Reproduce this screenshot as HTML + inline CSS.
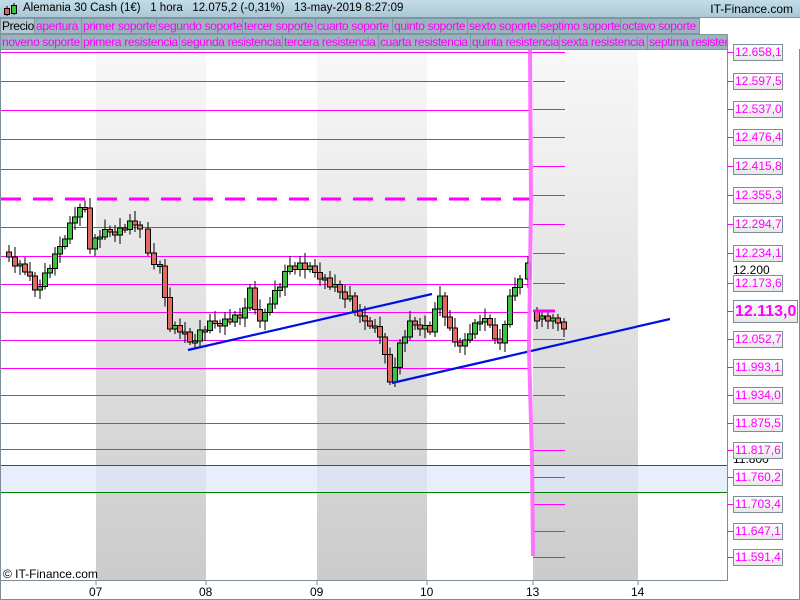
<!DOCTYPE html>
<html><head><meta charset="utf-8"><style>
*{margin:0;padding:0;box-sizing:border-box}
body{width:800px;height:600px;overflow:hidden;background:#fff;font-family:"Liberation Sans",sans-serif;position:relative}
#hdr{position:absolute;left:0;top:0;width:800px;height:18px;background:linear-gradient(#c4dde8,#a9c8d6);border-bottom:1px solid #7d96a3}
#hdr .t{position:absolute;left:23px;top:2px;font-size:11.5px;color:#000;white-space:pre}
#hdr .r{position:absolute;right:7px;top:2px;font-size:12px;color:#000}
.row{position:absolute;left:0;height:16px}
.c{position:absolute;top:0;height:16px;background:#9cb2be;border:1px solid #7d96a3;color:#f0f;font-size:12px;letter-spacing:-0.35px;line-height:14px;padding-left:1px;white-space:nowrap;overflow:hidden}
.lab{position:absolute;left:733px;width:50px;height:17px;border:1px solid #7d8c96;background:linear-gradient(#fff,#e8e8e8);color:#f0f;font-size:12px;line-height:15px;padding-left:1px}
.tk{position:absolute;left:727px;width:6px;height:1px;background:#f0f}
.xl{position:absolute;top:585px;font-size:12px;color:#000}
</style></head><body>
<div id="hdr">
<svg style="position:absolute;left:3px;top:2px" width="16" height="15"><line x1="4" y1="4" x2="4" y2="14" stroke="#000"/><rect x="1.5" y="6.5" width="5" height="6" fill="#e06060" stroke="#000"/><line x1="11" y1="1" x2="11" y2="13" stroke="#000"/><rect x="8.5" y="3.5" width="5" height="8" fill="#40c040" stroke="#000"/></svg>
<div class="t">Alemania 30 Cash (1€)   1 hora   12.075,2 (-0,31%)   13-may-2019 8:27:09</div>
<div class="r">IT-Finance.com</div>
</div>
<div class="row" style="top:18px;width:700px">
<div class="c" style="left:0;width:35px;color:#000;background:#b4c8d2">Precio</div>
<div class="c" style="left:34px;width:48px">apertura</div>
<div class="c" style="left:81px;width:76px">primer soporte</div>
<div class="c" style="left:156px;width:87px">segundo soporte</div>
<div class="c" style="left:242px;width:74px">tercer soporte</div>
<div class="c" style="left:315px;width:78px">cuarto soporte</div>
<div class="c" style="left:392px;width:76px">quinto soporte</div>
<div class="c" style="left:467px;width:72px">sexto soporte</div>
<div class="c" style="left:538px;width:83px">septimo soporte</div>
<div class="c" style="left:620px;width:80px">octavo soporte</div>
</div>
<div class="row" style="top:34px;width:728px">
<div class="c" style="left:0;width:82px">noveno soporte</div>
<div class="c" style="left:81px;width:99px">primera resistencia</div>
<div class="c" style="left:179px;width:104px">segunda resistencia</div>
<div class="c" style="left:282px;width:97px">tercera resistencia</div>
<div class="c" style="left:378px;width:93px">cuarta resistencia</div>
<div class="c" style="left:470px;width:90px">quinta resistencia</div>
<div class="c" style="left:559px;width:89px">sexta resistencia</div>
<div class="c" style="left:647px;width:81px">septima resistencia</div>
</div>
<svg id="ch" style="position:absolute;left:0;top:0" width="800" height="600">
<defs><linearGradient id="g" x1="0" y1="0" x2="0" y2="1"><stop offset="0" stop-color="#f8f8f8"/><stop offset="1" stop-color="#cbcbcb"/></linearGradient></defs>
<rect x="96" y="50" width="110" height="530" fill="url(#g)"/>
<rect x="317" y="50" width="110" height="530" fill="url(#g)"/>
<rect x="533" y="50" width="105" height="530" fill="url(#g)"/>
<rect x="1" y="465" width="726" height="27" fill="#dfe8fb" opacity="0.75"/>
<line x1="1" y1="465.5" x2="727" y2="465.5" stroke="#008000"/>
<line x1="1" y1="492.5" x2="727" y2="492.5" stroke="#008000"/>
<g id="hl" stroke="#f0f" stroke-width="1"></g>
<line x1="1" y1="199" x2="530" y2="199" stroke="#f0f" stroke-width="3" stroke-dasharray="20,12"/>
<g id="cd"></g>
<line x1="188" y1="350" x2="432" y2="294" stroke="#0010e0" stroke-width="2.2"/>
<line x1="392" y1="383" x2="670" y2="319" stroke="#0010e0" stroke-width="2.2"/>
<polyline points="530,50 531,200 529,350 532,460 533,556" fill="none" stroke="#f6f" stroke-width="4" opacity="0.9"/>
<line x1="533" y1="311" x2="555" y2="311" stroke="#f0f" stroke-width="3"/>
<line x1="727.5" y1="49" x2="727.5" y2="581" stroke="#7d8c96"/>
<line x1="0" y1="580.5" x2="728" y2="580.5" stroke="#7d8c96"/>
<line x1="0.5" y1="49" x2="0.5" y2="600" stroke="#7d8c96"/>
<line x1="799.5" y1="49" x2="799.5" y2="600" stroke="#7d8c96"/>
<line x1="0" y1="599.5" x2="800" y2="599.5" stroke="#7d8c96"/>
<g stroke="#7d8c96"><line x1="96" y1="580" x2="96" y2="585"/><line x1="206" y1="580" x2="206" y2="585"/><line x1="317" y1="580" x2="317" y2="585"/><line x1="427" y1="580" x2="427" y2="585"/><line x1="533" y1="580" x2="533" y2="585"/><line x1="638" y1="580" x2="638" y2="585"/></g>
</svg>
<div style="position:absolute;left:3px;top:567px;font-size:12px">© IT-Finance.com</div>
<div class="xl" style="left:89px">07</div><div class="xl" style="left:199px">08</div><div class="xl" style="left:310px">09</div><div class="xl" style="left:420px">10</div><div class="xl" style="left:526px">13</div><div class="xl" style="left:631px">14</div>
<div style="position:absolute;left:733px;top:263px;font-size:12px">12.200</div>
<div style="position:absolute;left:733px;top:452px;font-size:12px">11.800</div>
<div id="labs"></div>
<script>
(function(){
var labs=[["12.658,1",52],["12.597,5",81],["12.537,0",109],["12.476,4",137],["12.415,8",166],["12.355,3",195],["12.294,7",224],["12.234,1",253],["12.173,6",283],["12.052,7",339],["11.993,1",367],["11.934,0",395],["11.875,5",423],["11.817,6",450],["11.760,2",477],["11.703,4",504],["11.647,1",531],["11.591,4",557]];
var h="";labs.forEach(function(l){h+='<div class="tk" style="top:'+l[1]+'px"></div><div class="lab" style="top:'+(l[1]-8)+'px">'+l[0]+'</div>';});
h+='<div class="tk" style="top:311px"></div><div class="lab" style="top:300px;width:65px;height:23px;font-size:16px;font-weight:bold;line-height:21px">12.113,0</div>';
document.getElementById("labs").innerHTML=h;
var hl=document.getElementById("hl"),s="";
[52,81,110,139,169,227,256,284,312,340,368,395,423,449].forEach(function(y){s+='<line x1="1" y1="'+(y+.5)+'" x2="530" y2="'+(y+.5)+'"/>';});
labs.forEach(function(l){s+='<line x1="533" y1="'+(l[1]+.5)+'" x2="565" y2="'+(l[1]+.5)+'"/>';});
s+='<line x1="1" y1="52.5" x2="565" y2="52.5"/>';
hl.innerHTML=s;
var pts=[[3,252],[15,262],[25,270],[35,290],[45,275],[55,258],[65,235],[75,215],[85,208],[90,245],[100,235],[110,232],[120,230],[130,225],[140,225],[148,255],[160,270],[170,325],[180,330],[190,342],[200,332],[210,325],[220,322],[230,320],[240,318],[250,290],[260,325],[270,300],[280,285],[290,266],[300,265],[310,270],[320,275],[330,285],[340,292],[350,298],[360,320],[370,322],[380,335],[390,382],[400,345],[410,325],[420,325],[430,330],[440,296],[450,330],[460,350],[470,330],[480,320],[490,325],[500,345],[510,300],[520,275],[528,265]];
var c="",prev=pts[0][1],k=0;
for(var i=1;i<pts.length;i++){var a=pts[i-1],b=pts[i],n=Math.max(1,Math.round((b[0]-a[0])/5.5));
for(var j=1;j<=n;j++){k++;var x=a[0]+(b[0]-a[0])*j/n,y=a[1]+(b[1]-a[1])*j/n+((k*7)%5-2)*2;
var t0=Math.min(prev,y),b0=Math.max(prev,y);if(b0-t0<2)b0=t0+2;var up=y<prev;
c+='<line x1="'+x+'" y1="'+(t0-4-(k%3)*3)+'" x2="'+x+'" y2="'+(b0+3+(k%4)*2)+'" stroke="#000"/>';
c+='<rect x="'+(x-2.5)+'" y="'+t0+'" width="5" height="'+(b0-t0)+'" fill="'+(up?'#40c040':'#e06a60')+'" stroke="#000" stroke-width="1"/>';prev=y;}}
[[537,311,320],[542,318,316],[548,316,320],[553,320,318],[558,318,322],[564,322,328]].forEach(function(q){var t0=Math.min(q[1],q[2]),b0=Math.max(q[1],q[2])+1;
c+='<line x1="'+q[0]+'" y1="'+(t0-4)+'" x2="'+q[0]+'" y2="'+(b0+8)+'" stroke="#000"/><rect x="'+(q[0]-2.5)+'" y="'+t0+'" width="5" height="'+(b0-t0)+'" fill="'+(q[2]<q[1]?'#40c040':'#e06a60')+'" stroke="#000"/>';});
document.getElementById("cd").innerHTML=c;
})();
</script>
</body></html>
